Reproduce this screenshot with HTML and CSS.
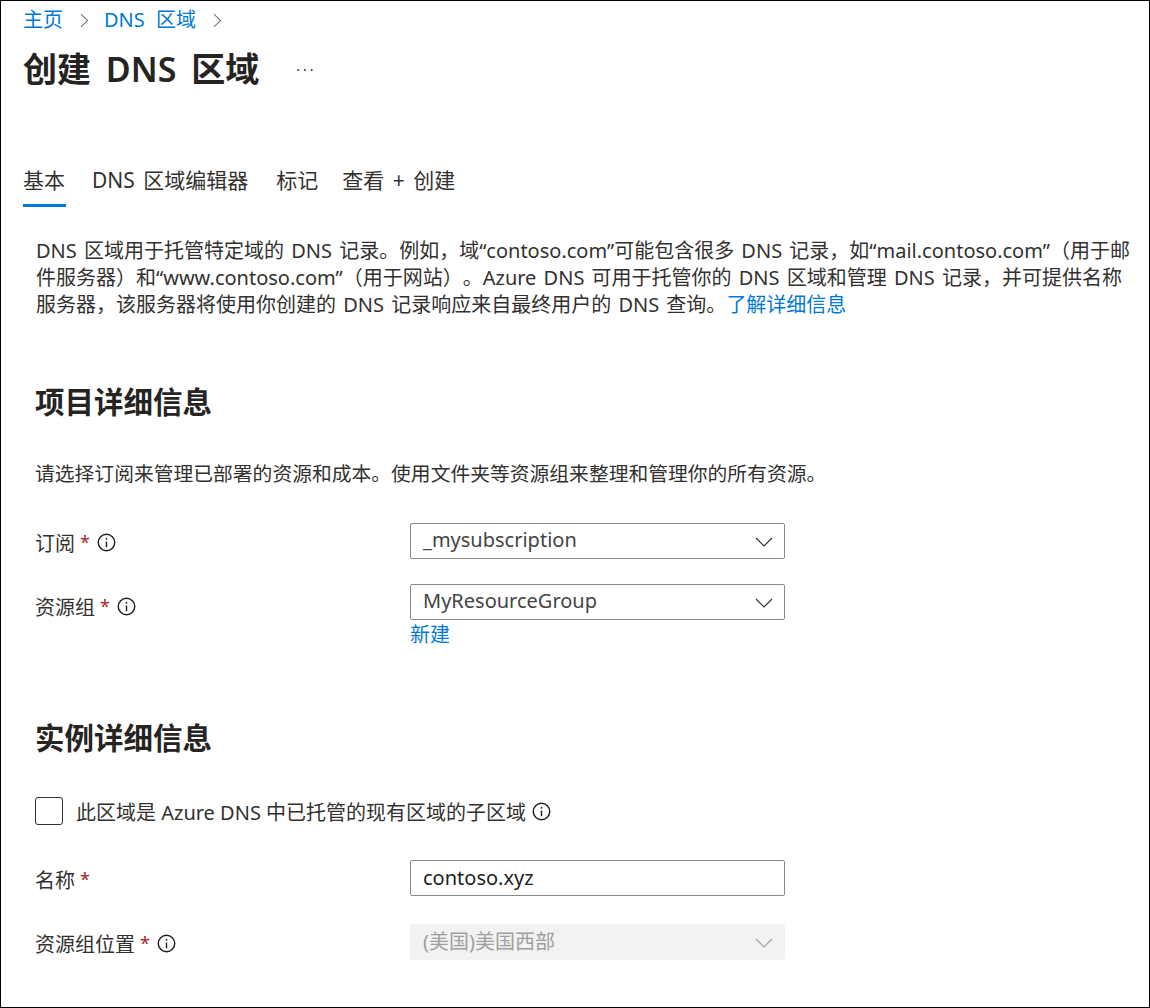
FILE: index.html
```html
<!DOCTYPE html>
<html lang="zh-CN">
<head>
    <meta charset="UTF-8">
    <title>创建 DNS 区域</title>
    <link rel="stylesheet" href="styles.css">
</head>
<body>
    <div class="frame">
        <nav class="crumbs">
            <a href="#">主页</a>
            <svg class="crumb-sep" viewBox="0 0 10 16"><path d="M1 1l7.5 7L1 15"/></svg>
            <a href="#">DNS 区域</a>
            <svg class="crumb-sep" viewBox="0 0 10 16"><path d="M1 1l7.5 7L1 15"/></svg>
        </nav>
        <div class="title-row">
            <h1>创建 DNS 区域</h1>
            <span class="more">···</span>
        </div>
        <div class="tabs">
            <span class="tab active">基本</span>
            <span class="tab">DNS 区域编辑器</span>
            <span class="tab">标记</span>
            <span class="tab">查看 + 创建</span>
        </div>
        <div class="content">
            <p class="intro">DNS 区域用于托管特定域的 DNS 记录。例如，域“contoso.com”可能包含很多 DNS 记录，如“mail.contoso.com”（用于邮件服务器）和“www.contoso.com”（用于网站）。Azure DNS 可用于托管你的 DNS 区域和管理 DNS 记录，并可提供名称服务器，该服务器将使用你创建的 DNS 记录响应来自最终用户的 DNS 查询。<a href="#">了解详细信息</a></p>

            <h2 class="first">项目详细信息</h2>
            <p class="desc">请选择订阅来管理已部署的资源和成本。使用文件夹等资源组来整理和管理你的所有资源。</p>

            <div class="field sub">
                <div class="label">订阅 <span class="req">*</span>
                    <svg class="info" viewBox="0 0 20 20"><circle cx="10" cy="10" r="8.7"/><path d="M10 9v6"/><path d="M10 5.2v1.8"/></svg>
                </div>
                <div class="select">_mysubscription<svg class="chev" viewBox="0 0 18 10"><path d="M1 1l8 8 8-8"/></svg></div>
            </div>
            <div class="field group">
                <div class="label">资源组 <span class="req">*</span>
                    <svg class="info" viewBox="0 0 20 20"><circle cx="10" cy="10" r="8.7"/><path d="M10 9v6"/><path d="M10 5.2v1.8"/></svg>
                </div>
                <div class="control">
                    <div class="select">MyResourceGroup<svg class="chev" viewBox="0 0 18 10"><path d="M1 1l8 8 8-8"/></svg></div>
                    <a class="new-link" href="#">新建</a>
                </div>
            </div>

            <h2 class="second">实例详细信息</h2>
            <div class="check-row">
                <span class="checkbox"></span>
                <span>此区域是 Azure DNS 中已托管的现有区域的子区域</span>
                <svg class="info" viewBox="0 0 20 20"><circle cx="10" cy="10" r="8.7"/><path d="M10 9v6"/><path d="M10 5.2v1.8"/></svg>
            </div>
            <div class="field name">
                <div class="label">名称 <span class="req">*</span></div>
                <div class="select text-input">contoso.xyz</div>
            </div>
            <div class="field location">
                <div class="label">资源组位置 <span class="req">*</span>
                    <svg class="info" viewBox="0 0 20 20"><circle cx="10" cy="10" r="8.7"/><path d="M10 9v6"/><path d="M10 5.2v1.8"/></svg>
                </div>
                <div class="select disabled">(美国)美国西部<svg class="chev" viewBox="0 0 18 10"><path d="M1 1l8 8 8-8"/></svg></div>
            </div>
        </div>
    </div>
</body>
</html>
```

FILE: styles.css
```css
* {
    box-sizing: border-box;
}

body {
    margin: 0;
    background: #fff;
    color: #323130;
    font-family: "Noto Sans", "Noto Sans CJK SC", sans-serif;
    font-size: 20px;
}

a {
    color: #0078d4;
    text-decoration: none;
}

.frame {
    width: 1150px;
    height: 1008px;
    border: 1px solid #000;
    overflow: hidden;
    padding-left: 22px;
}

.crumbs {
    display: flex;
    align-items: center;
    height: 38px;
    font-size: 20px;
    line-height: 38px;
    word-spacing: 6px;
}

.crumb-sep {
    width: 9px;
    height: 15px;
    margin: 0 15px 0 17px;
    fill: none;
    stroke: #777;
    stroke-width: 1.2;
}

.title-row {
    display: flex;
    align-items: center;
    height: 60px;
}

h1 {
    margin: 0;
    font-size: 34px;
    font-weight: 600;
    color: #252423;
    line-height: 60px;
    word-spacing: 6px;
}

.more {
    margin-left: 37px;
    font-size: 14px;
    letter-spacing: 3px;
}

.tabs {
    display: flex;
    margin-top: 59px;
    height: 49px;
    word-spacing: 3px;
}

.tab {
    margin-right: 26px;
    font-size: 21px;
    line-height: 44px;
}

.tab:nth-child(2) {
    margin-right: 28px;
}

.tab:nth-child(3) {
    margin-right: 24px;
}

.tab.active {
    margin-right: 26px;
    border-bottom: 3px solid #0078d4;
    padding: 0 1px 0 0;
    height: 49px;
}

.content {
    padding: 0 0 0 12px;
}

.intro {
    margin: 30px 0 0 1px;
    line-height: 27px;
    width: 1105px;
    word-spacing: 2px;
    text-spacing-trim: space-all;
}

h2 {
    margin: 0;
    font-size: 29.5px;
    font-weight: 700;
    color: #252423;
    line-height: 40px;
}

h2.first {
    margin-top: 64px;
}

h2.second {
    margin-top: 68px;
}

.desc {
    margin: 38px 0 0;
    line-height: 28px;
    font-size: 19.8px;
}

.field {
    display: flex;
}

.field.sub {
    margin-top: 35px;
}

.field.group {
    margin-top: 25px;
}

.field.name {
    margin-top: 35px;
}

.field.location {
    margin-top: 28px;
}

.label {
    display: flex;
    align-items: center;
    gap: 5px;
    width: 375px;
    height: 36px;
    padding-top: 2px;
}

.group .label {
    padding-top: 8px;
}

.req {
    color: #a4262c;
    font-size: 18px;
}

.info {
    width: 19px;
    height: 19px;
    margin-left: 2px;
    fill: none;
    stroke: #201f1e;
    stroke-width: 1.5;
    flex: none;
}

.select {
    position: relative;
    width: 375px;
    height: 36px;
    border: 1px solid #8a8886;
    border-radius: 2px;
    padding-left: 12px;
    line-height: 31px;
    font-size: 20px;
    color: #444;
}

.chev {
    position: absolute;
    right: 11px;
    top: 13px;
    width: 18px;
    height: 10px;
    fill: none;
    stroke: #323130;
    stroke-width: 1.2;
}

.new-link {
    display: block;
    line-height: 30px;
}

h2 + .check-row {
    margin-top: 39px;
}

.check-row {
    display: flex;
    align-items: center;
    gap: 13px;
    height: 28px;
}

.checkbox {
    width: 28px;
    height: 28px;
    border: 1px solid #323130;
    border-radius: 3px;
}

.check-row .info {
    margin-left: -7px;
}

.text-input {
    color: #201f1e;
    line-height: 33px;
}

.select.disabled {
    background: #f2f2f2;
    border-color: #f2f2f2;
    color: #a19f9d;
    line-height: 33px;
}

.disabled .chev {
    stroke: #a19f9d;
}
```
